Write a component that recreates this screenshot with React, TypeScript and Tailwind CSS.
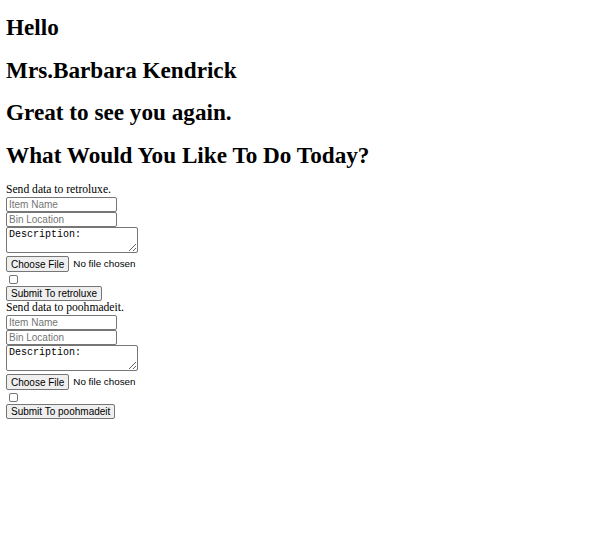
import React from "react";

const sites = ["retroluxe", "poohmadeit"];

const SendForm = ({ site }: { site: string }) => {
  return (
    <form className="flex flex-col items-start" onSubmit={(e) => e.preventDefault()}>
      <div className="h-[14px] text-[11.6px] leading-[14px] font-['Liberation_Serif',serif] text-black">
        Send data to {site}.
      </div>
      <input
        className="w-[111px] h-[15px] border border-[#767676] rounded-[2px] px-[2px] text-[10px] leading-[13px] font-['Liberation_Sans',Arial,sans-serif] placeholder:text-[#757575] outline-none"
        type="text"
        placeholder="Item Name"
      />
      <input
        className="w-[111px] h-[15px] border border-[#767676] rounded-[2px] px-[2px] text-[10px] leading-[13px] font-['Liberation_Sans',Arial,sans-serif] placeholder:text-[#757575] outline-none"
        type="text"
        placeholder="Bin Location"
      />
      <textarea
        className="w-[132px] h-[26px] border border-[#767676] rounded-[2px] px-[2px] py-[1px] text-[10px] leading-[11px] font-['Liberation_Mono','Courier_New',monospace] text-black resize outline-none"
        defaultValue="Description:"
      />
      <div className="mt-[3px] h-[16px] flex items-center gap-[4px] font-['Liberation_Sans',Arial,sans-serif] text-[10px]">
        <label className="h-[16px] px-[4px] flex items-center border border-[#767676] rounded-[2px] bg-[#efefef] text-black cursor-pointer">
          Choose File
          <input type="file" className="hidden" />
        </label>
        <span className="text-[9.8px] text-black">No file chosen</span>
      </div>
      <input
        type="checkbox"
        className="appearance-none mt-[3px] ml-[3px] w-[9px] h-[9px] border border-[#767676] rounded-[2px] bg-white"
      />
      <button
        type="submit"
        className="mt-[2px] h-[15px] px-[4px] flex items-center border border-[#767676] rounded-[2px] bg-[#efefef] text-[10px] text-black font-['Liberation_Sans',Arial,sans-serif]"
      >
        Submit To {site}
      </button>
    </form>
  );
};

export default function App() {
  return (
    <div className="bg-white min-h-[533px] pl-[6px] pt-[14px] text-black">
      <h1 className="text-[23.2px] leading-[27px] font-bold font-['Liberation_Serif',serif] mb-[15.7px]">Hello</h1>
      <h1 className="text-[23.2px] leading-[27px] font-bold font-['Liberation_Serif',serif] mb-[15.7px]">Mrs.Barbara Kendrick</h1>
      <h1 className="text-[23.2px] leading-[27px] font-bold font-['Liberation_Serif',serif] mb-[15.7px]">Great to see you again.</h1>
      <h1 className="text-[23.2px] leading-[27px] font-bold font-['Liberation_Serif',serif] mb-[14px]">What Would You Like To Do Today?</h1>
      {sites.map((s) => (
        <SendForm key={s} site={s} />
      ))}
    </div>
  );
}
